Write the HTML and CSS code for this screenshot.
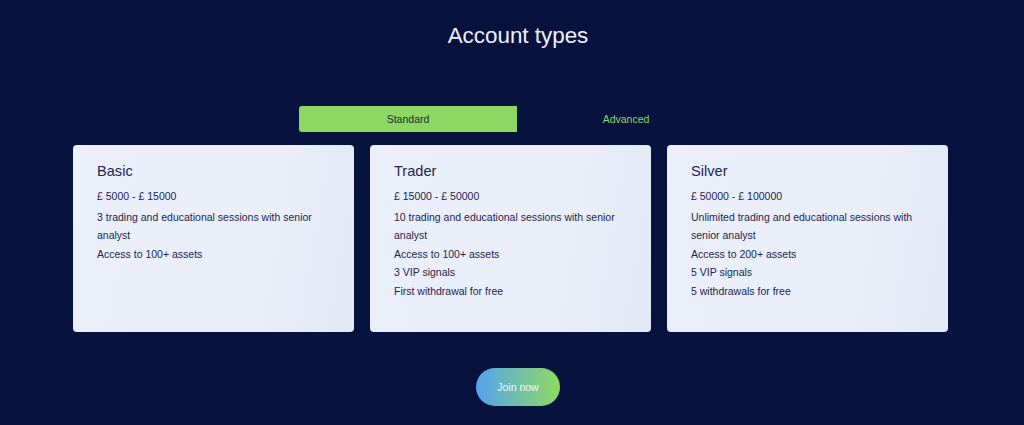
FILE: index.html
```html
<!DOCTYPE html>
<html lang="en">

<head>
    <meta charset="utf-8">
    <meta name="viewport" content="width=device-width, initial-scale=1.0">
    <title>Account types</title>
    <link rel="stylesheet" href="styles.css">
</head>

<body>
    <section class="accounts">
        <h1 class="accounts-title">Account types</h1>

        <div class="tabs">
            <button class="tab tab-active">Standard</button>
            <button class="tab">Advanced</button>
        </div>

        <div class="cards">
            <div class="card">
                <h2 class="card-title">Basic</h2>
                <p class="card-price">£ 5000 - £ 15000</p>
                <ul class="card-list">
                    <li>3 trading and educational sessions with senior analyst</li>
                    <li>Access to 100+ assets</li>
                </ul>
            </div>
            <div class="card">
                <h2 class="card-title">Trader</h2>
                <p class="card-price">£ 15000 - £ 50000</p>
                <ul class="card-list">
                    <li>10 trading and educational sessions with senior analyst</li>
                    <li>Access to 100+ assets</li>
                    <li>3 VIP signals</li>
                    <li>First withdrawal for free</li>
                </ul>
            </div>
            <div class="card">
                <h2 class="card-title">Silver</h2>
                <p class="card-price">£ 50000 - £ 100000</p>
                <ul class="card-list">
                    <li>Unlimited trading and educational sessions with senior analyst</li>
                    <li>Access to 200+ assets</li>
                    <li>5 VIP signals</li>
                    <li>5 withdrawals for free</li>
                </ul>
            </div>
        </div>

        <div class="cta">
            <a class="join-btn" href="#">Join now</a>
        </div>
    </section>
</body>

</html>
```

FILE: styles.css
```css
body {
    margin: 0;
    padding: 0;
    background: #08123f;
    font-family: "Liberation Sans", Arial, Helvetica, sans-serif;
    overflow: hidden;
}

.accounts {
    width: 1024px;
    height: 425px;
    padding-top: 22px;
    box-sizing: border-box;
}

.accounts-title {
    margin: 0;
    padding-left: 12px;
    text-align: center;
    font-size: 22.4px;
    line-height: 28px;
    font-weight: 400;
    color: #eef1fb;
}

.tabs {
    display: flex;
    justify-content: center;
    padding-left: 10px;
    margin-top: 56px;
}

.tab {
    width: 218px;
    height: 26px;
    border: none;
    border-radius: 3px 0 0 3px;
    background: transparent;
    color: #8bd962;
    font-family: inherit;
    font-size: 10.5px;
    cursor: pointer;
}

.tab-active {
    background: #8bd962;
    color: #1e2b3c;
}

.cards {
    display: flex;
    gap: 16px;
    width: 875px;
    margin: 13px 0 0 73px;
}

.card {
    flex: 0 0 281px;
    height: 187px;
    box-sizing: border-box;
    padding: 16px 24px;
    border-radius: 4px;
    background: linear-gradient(100deg, #eaeffa 0%, #e9eef9 70%, #e2e8f4 100%);
    color: #1d2550;
}

.card-title {
    margin: 0;
    font-size: 14.6px;
    line-height: 20px;
    font-weight: 400;
}

.card-price {
    margin: 6px 0 0;
    font-size: 10.5px;
    line-height: 18.5px;
}

.card-list {
    list-style: none;
    margin: 2px 0 0;
    padding: 0;
    font-size: 10.5px;
    line-height: 18.6px;
}

.cta {
    display: flex;
    justify-content: center;
    padding-left: 12px;
    margin-top: 36px;
}

.join-btn {
    display: flex;
    align-items: center;
    justify-content: center;
    width: 84px;
    height: 38px;
    border-radius: 19px;
    background: linear-gradient(90deg, #55a2f0 0%, #8ddb5f 100%);
    color: #f4f8ff;
    font-size: 10.5px;
    text-decoration: none;
}
```
